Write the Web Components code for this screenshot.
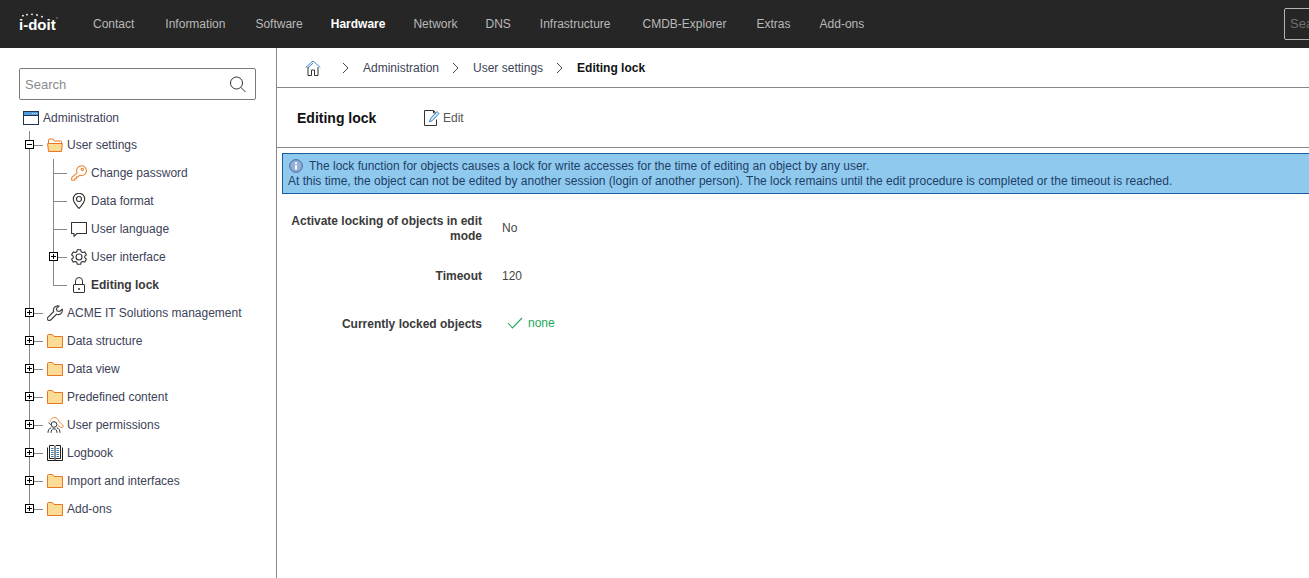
<!DOCTYPE html>
<html>
<head>
<meta charset="utf-8">
<title>Editing lock</title>
<style>
  html, body { margin: 0; height: 100%; overflow: hidden; background: #fff; }
  body { font-family: "Liberation Sans", Arial, sans-serif; font-size: 12px; color: #3c4257; }
</style>
</head>
<body>
<script>
const ICONS = {
  window: `<svg width="16" height="14" viewBox="0 0 16 14"><rect x=".5" y=".5" width="15" height="13" fill="#fff" stroke="#1d3350"/><rect x="1" y="1" width="14" height="3" fill="#4f9bdc"/><path d="M9 2.500h5" stroke="#cfe4f6" stroke-dasharray="1 1"/><path d="M1 4.500h14" stroke="#1d3350"/></svg>`,
  folderOpen: `<svg width="16" height="14" viewBox="0 0 16 14"><path d="M1.500 12.500V2a1 1 0 0 1 1-1h3.500l1.500 2h6a1 1 0 0 1 1 1v8.500z" fill="#fff" stroke="#e87722"/><path d="M.6 5.500h14.800l-.9 8h-13z" fill="#fbdc94" stroke="#e87722" stroke-linejoin="round"/></svg>`,
  folder: `<svg width="16" height="14" viewBox="0 0 16 14"><path d="M.5 13.500V1.500a1 1 0 0 1 1-1h4l1.500 2h8.500v11z" fill="#fbdc94" stroke="#e87722"/></svg>`,
  key: `<svg width="16" height="16" viewBox="0 0 16 16" fill="none" stroke="#ea8a3d" stroke-width="1.100"><path d="M6.200 7.900a4.900 4.900 0 1 1 2.500 2.300L7 11.900H5.400v1.700H3.700v1.700H.7v-2.800z" stroke-linejoin="round"/><circle cx="11.300" cy="4.600" r="1.200"/></svg>`,
  pin: `<svg width="16" height="16" viewBox="0 0 16 16" fill="none" stroke="#333" stroke-width="1.100"><path d="M8 15.500C5 12 2.300 9.500 2.300 6a5.700 5.700 0 0 1 11.400 0c0 3.500-2.700 6-5.700 9.500z"/><circle cx="8" cy="6" r="2.500"/></svg>`,
  speech: `<svg width="16" height="16" viewBox="0 0 16 16" fill="none" stroke="#333" stroke-width="1.100"><path d="M.5 1.500h15v11H6L3 15.300v-2.800H.5z" stroke-linejoin="round"/></svg>`,
  gear: `<svg width="16" height="16" viewBox="0 0 16 16" fill="none" stroke="#333" stroke-width="1.100"><path d="M6.300.7h3.400l.4 2 1.600.9 2-.7 1.700 2.900-1.600 1.400v1.600l1.600 1.400-1.700 2.900-2-.7-1.600.9-.4 2H6.300l-.4-2-1.600-.9-2 .7L.6 10.200l1.600-1.400V7.200L.6 5.800l1.700-2.900 2 .7 1.600-.9z" stroke-linejoin="round"/><circle cx="8" cy="8" r="3"/></svg>`,
  lock: `<svg width="16" height="16" viewBox="0 0 16 16" fill="none" stroke="#333"><rect x="2.500" y="7.500" width="11" height="8" rx=".5"/><path d="M4.500 7.500V4a3.500 3.500 0 0 1 7 0v3.500"/><rect x="7" y="11" width="2" height="2" fill="#666" stroke="none"/></svg>`,
  wrench: `<svg width="16" height="16" viewBox="0 0 16 16" fill="none" stroke="#444" stroke-width="1.200"><path d="M10.300.8a4.200 4.200 0 0 0-3.600 5.700L.9 12.300a1.900 1.900 0 0 0 2.700 2.700l5.900-5.800a4.200 4.200 0 0 0 5.700-5l-2.700 2.300-2.500-.6-.6-2.500L12.200 1.100z" stroke-linejoin="round"/></svg>`,
  users: `<svg width="17" height="16" viewBox="0 0 17 16" fill="none" stroke-width="1"><path d="M3 4.500C3.500 1.500 6.500 0 9 .8c2 .7 2.500 2.800 3.500 4.300s3.700 2.400 3.700 4-1.700 2-3 .9L10.500 8" stroke="#ea8a3d"/><circle cx="7" cy="7.500" r="2.800" stroke="#333"/><path d="M1 15.800c0-2.600 1-4.500 3.200-5M4 15.800c0-2.500 1-4 3-4s3 1.500 3 4M9.800 10.800c2.200.5 3.200 2.400 3.200 5M4.500 7.500c-1.500 0-2.300-.8-2.500-2" stroke="#333"/></svg>`,
  book: `<svg width="16" height="16" viewBox="0 0 16 16" fill="none" stroke="#1f1f1f"><path d="M.5 2.500v13h15v-13"/><path d="M2.500 13.500V.5h4.500l1 1 1-1h4.500v13H9l-1 1-1-1zM8 1.500v13"/><path d="M4 3.500h2.500M4 5.500h2.500M4 7.500h2.500M4 9.500h2.500M4 11.500h2.500M9.500 3.500H12M9.500 5.500H12M9.500 7.500H12M9.500 9.500H12M9.500 11.500H12" stroke="#2f78b7"/></svg>`,
};

class TopBar extends HTMLElement {
  constructor() {
    super();
    this.attachShadow({ mode: "open" }).innerHTML = `
      <style>
        :host { display: flex; align-items: center; height: 48px; background: #262626; color: #b9b9b9; overflow: hidden; flex: none; }
        .logo { width: 93px; flex: none; position: relative; height: 48px; }
        .logo b { position: absolute; left: 19px; top: 16px; color: #fff; font-size: 15px; line-height: 18px; }
        .logo svg { position: absolute; left: 19px; top: 13px; }
        nav { display: flex; flex: 1; }
        .search { flex: none; width: 60px; height: 32px; margin-right: -35px; box-sizing: border-box; border: 1px solid #b4b4b4; border-radius: 2px; padding: 0 5px; line-height: 30px; color: #6f6f6f; font-size: 13px; overflow: hidden; }
      </style>
      <div class="logo"><svg width="40" height="7" viewBox="0 0 40 7" fill="#fff"><circle cx="4" cy="2.700" r=".9"/><circle cx="8" cy="1.700" r=".9"/><circle cx="13" cy="1.300" r=".9"/><circle cx="18" cy="2" r=".9"/><circle cx="23" cy="3.700" r=".9"/><circle cx="38" cy="5" r=".7" fill="#aaa"/></svg><b>i-doit</b></div>
      <nav><slot></slot></nav>
      <div class="search">Search</div>`;
  }
}
customElements.define("top-bar", TopBar);

class NavItem extends HTMLElement {
  constructor() {
    super();
    this.attachShadow({ mode: "open" }).innerHTML = `
      <style>
        :host { display: block; margin-right: var(--gap, 30px); white-space: nowrap; line-height: 48px; }
        :host([active]) { color: #fff; font-weight: bold; }
      </style><slot></slot>`;
  }
}
customElements.define("nav-item", NavItem);

class SideSearch extends HTMLElement {
  constructor() {
    super();
    this.attachShadow({ mode: "open" }).innerHTML = `
      <style>
        :host { display: flex; align-items: center; justify-content: space-between; box-sizing: border-box; width: 237px; height: 32px; border: 1px solid #7a7a7a; border-radius: 2px; padding: 0 9px 0 5px; color: #8a8a8a; font-size: 13px; }
        svg { display: block; }
      </style>
      <span>Search</span>
      <svg width="18" height="18" viewBox="0 0 18 18" fill="none" stroke="#333"><circle cx="8.500" cy="8" r="6"/><path d="M13 12.500l4.500 4.500"/></svg>`;
  }
}
customElements.define("side-search", SideSearch);

class TreeNode extends HTMLElement {
  constructor() {
    super();
    const toggle = this.getAttribute("toggle");
    const mark = toggle === "minus" ? `<path d="M1 3.500h5" stroke="#000"/>` : `<path d="M1 3.500h5M3.500 1v5" stroke="#000"/>`;
    this.attachShadow({ mode: "open" }).innerHTML = `
      <style>
        :host { display: block; position: relative; }
        .row { display: flex; align-items: center; height: 28px; white-space: nowrap; position: relative; }
        .stub { width: 14px; height: 1px; background: #888; margin-right: 4px; flex: none; }
        .ico { width: 16px; height: 16px; display: flex; align-items: center; justify-content: flex-start; margin-right: 4px; flex: none; }
        .ico svg { display: block; flex: none; }
        .tog { position: absolute; left: -4px; top: 9px; width: 9px; height: 9px; box-sizing: border-box; border: 1px solid #000; background: #fff; display: block; }
        .tog svg { display: block; }
        :host([bold]) .lbl { font-weight: bold; color: #3a3a3a; }
        .kids { margin-left: 24px; position: relative; }
      </style>
      <div class="row">
        <span class="stub"></span>
        ${toggle ? `<span class="tog"><svg width="7" height="7" viewBox="0 0 7 7">${mark}</svg></span>` : ""}
        <span class="ico">${ICONS[this.getAttribute("icon")] || ""}</span>
        <span class="lbl">${this.getAttribute("label")}</span>
      </div>
      <div class="kids"><slot></slot></div>`;
  }
}
customElements.define("tree-node", TreeNode);

class TreeGroup extends HTMLElement {
  constructor() {
    super();
    this.attachShadow({ mode: "open" }).innerHTML = `
      <style>
        :host { display: block; position: relative; }
        :host::before { content: ""; position: absolute; left: 0; top: 0; bottom: 14px; width: 1px; background: #888; }
      </style><slot></slot>`;
  }
}
customElements.define("tree-group", TreeGroup);

class SideBar extends HTMLElement {
  constructor() {
    super();
    this.attachShadow({ mode: "open" }).innerHTML = `
      <style>
        :host { display: block; width: 277px; flex: none; box-sizing: border-box; border-right: 1px solid #888; padding: 20px 0 0 19px; }
        .root { display: flex; align-items: center; height: 28px; margin: 4px 0 0 4px; gap: 4px; }
        .root svg { display: block; }
        .tree { margin: -1px 0 0 10px; }
      </style>
      <side-search></side-search>
      <div class="root">${ICONS.window}<span>Administration</span></div>
      <div class="tree"><slot></slot></div>`;
  }
}
customElements.define("side-bar", SideBar);

class CrumbBar extends HTMLElement {
  constructor() {
    super();
    const chev = `<svg class="chev" width="7" height="12" viewBox="0 0 7 12" fill="none" stroke="#444"><path d="M1 1l5 5-5 5"/></svg>`;
    this.attachShadow({ mode: "open" }).innerHTML = `
      <style>
        :host { display: flex; align-items: center; height: 40px; box-sizing: border-box; border-bottom: 1px solid #888; padding: 0 0 0 28px; flex: none; }
        svg { display: block; flex: none; }
        .home { margin-right: 21px; }
        .chev { margin-right: 14px; }
        span { margin-right: 13px; }
        b { color: #111; }
      </style>
      <svg class="home" width="16" height="16" viewBox="0 0 16 16" fill="none"><path d="M.7 7.500L8 1l7.300 6.500M8 3.200l-5 4.500" stroke="#3f86c6"/><path d="M3 7v8.500h3.500V10h3v5.500H13V7" stroke="#333"/></svg>
      ${chev}<span>Administration</span>${chev}<span>User settings</span>${chev}<b>Editing lock</b>`;
  }
}
customElements.define("crumb-bar", CrumbBar);

class TitleBar extends HTMLElement {
  constructor() {
    super();
    this.attachShadow({ mode: "open" }).innerHTML = `
      <style>
        :host { display: flex; align-items: center; height: 60px; box-sizing: border-box; border-bottom: 1px solid #888; padding-left: 20px; flex: none; }
        h1 { margin: 0; width: 127px; font-size: 14px; color: #111; }
        .edit { display: flex; align-items: center; gap: 3px; color: #555; }
        svg { display: block; }
      </style>
      <h1>${this.getAttribute("heading")}</h1>
      <div class="edit">
        <svg width="16" height="16" viewBox="0 0 16 16" fill="none"><path d="M12.500 9.500v6H.5V.5h9l2 2" stroke="#333"/><path d="M9.500.5V3H12" stroke="#333"/><path d="M5.500 12l1-3.500 6.500-7 2 2-6.500 7z" fill="#cfe4f6" stroke="#3f86c6"/></svg>
        <span>Edit</span>
      </div>`;
  }
}
customElements.define("title-bar", TitleBar);

class InfoBox extends HTMLElement {
  constructor() {
    super();
    this.attachShadow({ mode: "open" }).innerHTML = `
      <style>
        :host { display: block; box-sizing: border-box; height: 41px; margin: 5px -2px 0 5px; background: #90c9ee; border: 1px solid #1a5da0; padding: 5px 5px 0; color: #1c3f66; line-height: 15px; white-space: nowrap; overflow: hidden; }
        svg { vertical-align: -3px; margin: 0 6px 0 1px; }
      </style>
      <div><svg width="14" height="14" viewBox="0 0 14 14"><circle cx="7" cy="7" r="6.500" fill="#7f9fcf" stroke="#5a78a8"/><circle cx="7" cy="7" r="5" fill="#94b0d8"/><rect x="6" y="6" width="2" height="4.500" fill="#fff"/><rect x="6" y="3.300" width="2" height="1.700" fill="#fff"/></svg><slot name="first"></slot></div>
      <div><slot name="second"></slot></div>`;
  }
}
customElements.define("info-box", InfoBox);

class FormRow extends HTMLElement {
  constructor() {
    super();
    this.attachShadow({ mode: "open" }).innerHTML = `
      <style>
        :host { display: grid; grid-template-columns: 200px 1fr; column-gap: 20px; align-items: center; min-height: 30px; margin-bottom: 18px; padding-left: 5px; }
        :host([wrapped]) .k { margin: 1px 0 -1px; }
        .k { text-align: right; font-weight: bold; color: #3a3a3a; line-height: 15px; }
        .v { color: #444; }
      </style>
      <div class="k">${this.getAttribute("label")}</div>
      <div class="v"><slot></slot></div>`;
  }
}
customElements.define("form-row", FormRow);

class MainPane extends HTMLElement {
  constructor() {
    super();
    this.attachShadow({ mode: "open" }).innerHTML = `
      <style>
        :host { display: flex; flex-direction: column; flex: 1; min-width: 0; }
        .form { padding-top: 19px; }
      </style>
      <crumb-bar></crumb-bar>
      <title-bar heading="Editing lock"></title-bar>
      <slot name="info"></slot>
      <div class="form"><slot></slot></div>`;
  }
}
customElements.define("main-pane", MainPane);

class AppShell extends HTMLElement {
  constructor() {
    super();
    this.attachShadow({ mode: "open" }).innerHTML = `
      <style>
        :host { display: flex; flex-direction: column; height: 578px; width: 1309px; overflow: hidden; }
        .body { display: flex; flex: 1; min-height: 0; }
      </style>
      <slot name="top"></slot>
      <div class="body"><slot></slot></div>`;
  }
}
customElements.define("app-shell", AppShell);

document.body.insertAdjacentHTML("beforeend", `
<app-shell>
  <top-bar slot="top">
    <nav-item style="--gap:31px">Contact</nav-item><nav-item>Information</nav-item><nav-item style="--gap:28px">Software</nav-item><nav-item active style="--gap:28px">Hardware</nav-item><nav-item style="--gap:28px">Network</nav-item><nav-item style="--gap:29px">DNS</nav-item><nav-item style="--gap:32px">Infrastructure</nav-item><nav-item>CMDB-Explorer</nav-item><nav-item style="--gap:29px">Extras</nav-item><nav-item>Add-ons</nav-item>
  </top-bar>
  <side-bar>
    <tree-group>
      <tree-node toggle="minus" icon="folderOpen" label="User settings">
        <tree-group>
          <tree-node icon="key" label="Change password"></tree-node>
          <tree-node icon="pin" label="Data format"></tree-node>
          <tree-node icon="speech" label="User language"></tree-node>
          <tree-node toggle="plus" icon="gear" label="User interface"></tree-node>
          <tree-node bold icon="lock" label="Editing lock"></tree-node>
        </tree-group>
      </tree-node>
      <tree-node toggle="plus" icon="wrench" label="ACME IT Solutions management"></tree-node>
      <tree-node toggle="plus" icon="folder" label="Data structure"></tree-node>
      <tree-node toggle="plus" icon="folder" label="Data view"></tree-node>
      <tree-node toggle="plus" icon="folder" label="Predefined content"></tree-node>
      <tree-node toggle="plus" icon="users" label="User permissions"></tree-node>
      <tree-node toggle="plus" icon="book" label="Logbook"></tree-node>
      <tree-node toggle="plus" icon="folder" label="Import and interfaces"></tree-node>
      <tree-node toggle="plus" icon="folder" label="Add-ons"></tree-node>
    </tree-group>
  </side-bar>
  <main-pane>
    <info-box slot="info">
      <span slot="first">The lock function for objects causes a lock for write accesses for the time of editing an object by any user.</span>
      <span slot="second">At this time, the object can not be edited by another session (login of another person). The lock remains until the edit procedure is completed or the timeout is reached.</span>
    </info-box>
    <form-row wrapped label="Activate locking of objects in edit mode">No</form-row>
    <form-row label="Timeout">120</form-row>
    <form-row label="Currently locked objects"><span style="display:inline-flex;align-items:center;gap:5px;color:#22a858;margin-left:5px"><svg width="16" height="12" viewBox="0 0 16 12" fill="none" stroke="#22a858" stroke-width="1.100"><path d="M1 6l4.500 5L15 1"/></svg>none</span></form-row>
  </main-pane>
</app-shell>`);
</script>
</body>
</html>
